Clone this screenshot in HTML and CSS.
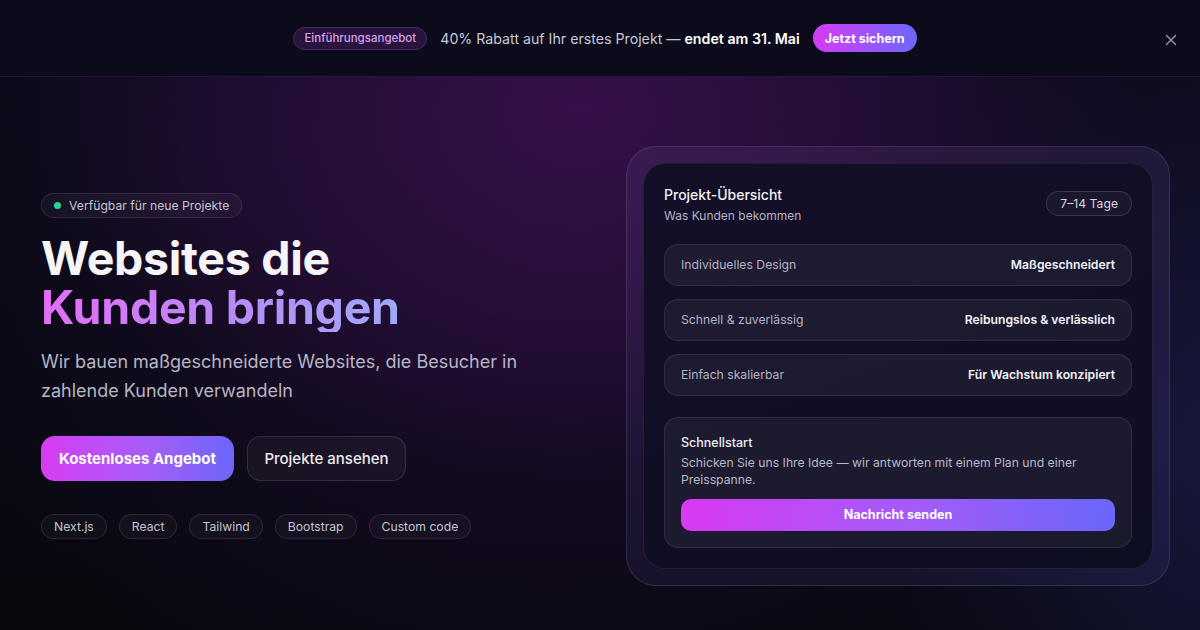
FILE: index.html
```html
<!DOCTYPE html>
<html lang="de">
<head>
<meta charset="utf-8">
<title>Websites die Kunden bringen</title>
<link rel="stylesheet" href="styles.css">
</head>
<body>
<div class="page">
  <header class="promo">
    <div class="promo-inner">
      <span class="promo-tag">Einführungsangebot</span>
      <span class="promo-text">40% Rabatt auf Ihr erstes Projekt — <strong>endet am 31. Mai</strong></span>
      <a class="promo-btn" href="#">Jetzt sichern</a>
    </div>
    <button class="promo-close" aria-label="Schließen">
      <svg width="12" height="12" viewBox="0 0 12 12"><path d="M1.5 1.5l9 9M10.5 1.5l-9 9" stroke="#9a9ab0" stroke-width="1.4" stroke-linecap="round"/></svg>
    </button>
  </header>

  <main class="hero">
    <section class="hero-left">
      <div class="status"><span class="dot"></span>Verfügbar für neue Projekte</div>
      <h1 class="title"><span class="line">Websites die</span><span class="line grad">Kunden bringen</span></h1>
      <p class="lead">Wir bauen maßgeschneiderte Websites, die Besucher in zahlende Kunden verwandeln</p>
      <div class="actions">
        <a class="btn btn-primary" href="#">Kostenloses Angebot</a>
        <a class="btn btn-ghost" href="#">Projekte ansehen</a>
      </div>
      <ul class="tags">
        <li>Next.js</li>
        <li>React</li>
        <li>Tailwind</li>
        <li>Bootstrap</li>
        <li>Custom code</li>
      </ul>
    </section>

    <section class="card-outer">
      <div class="card">
        <div class="card-head">
          <div>
            <div class="card-title">Projekt-Übersicht</div>
            <div class="card-sub">Was Kunden bekommen</div>
          </div>
          <span class="badge">7–14 Tage</span>
        </div>
        <div class="rows">
          <div class="row"><span>Individuelles Design</span><strong>Maßgeschneidert</strong></div>
          <div class="row"><span>Schnell &amp; zuverlässig</span><strong>Reibungslos &amp; verlässlich</strong></div>
          <div class="row"><span>Einfach skalierbar</span><strong>Für Wachstum konzipiert</strong></div>
        </div>
        <div class="quick">
          <div class="quick-title">Schnellstart</div>
          <p class="quick-text">Schicken Sie uns Ihre Idee — wir antworten mit einem Plan und einer Preisspanne.</p>
          <a class="quick-btn" href="#">Nachricht senden</a>
        </div>
      </div>
    </section>
  </main>
</div>
</body>
</html>
```

FILE: styles.css
```css
* { box-sizing: border-box; }
html, body { margin: 0; padding: 0; }
body {
  width: 1200px;
  height: 630px;
  overflow: hidden;
  font-family: "Inter", "Noto Sans", sans-serif;
  background: #08080f;
  color: #f2f2f7;
}
a { text-decoration: none; color: inherit; }

.page { height: 630px; display: flex; flex-direction: column; }

/* promo bar */
.promo {
  position: relative;
  height: 77px;
  flex: none;
  background: #0b0b1c;
  border-bottom: 1px solid #24163a;
  display: flex;
  align-items: center;
  justify-content: center;
}
.promo-inner { display: flex; align-items: center; gap: 13px; margin-left: 10px; }
.promo-tag {
  font-size: 11.5px;
  font-weight: 500;
  color: #d6a2f0;
  background: #28143c;
  border: 1px solid #45285e;
  border-radius: 999px;
  padding: 0 10px;
  height: 23px;
  display: flex;
  align-items: center;
}
.promo-text { font-size: 14.2px; color: #c9c9d6; }
.promo-text strong { color: #ffffff; font-weight: 600; }
.promo-btn {
  font-size: 12.5px;
  font-weight: 700;
  color: #fff;
  background: linear-gradient(90deg, #d63cf4, #6d67fb);
  border-radius: 999px;
  height: 28px;
  padding: 0 12px;
  display: flex;
  align-items: center;
  white-space: nowrap;
}
.promo-close {
  position: absolute;
  right: 23px;
  top: 34px;
  background: none;
  border: 0;
  padding: 0;
  width: 12px;
  height: 12px;
  display: flex;
}

/* hero */
.hero {
  flex: 1;
  display: flex;
  align-items: center;
  justify-content: space-between;
  padding: 24px 30px 0 41px;
  background:
    radial-gradient(ellipse 560px 380px at 580px 30px, rgba(60, 18, 82, 0.8), rgba(60, 18, 82, 0) 100%),
    radial-gradient(ellipse 640px 520px at 560px 180px, rgba(44, 14, 66, 0.5), rgba(44, 14, 66, 0) 100%),
    radial-gradient(ellipse 360px 480px at 1230px 380px, rgba(36, 36, 96, 0.55), rgba(36, 36, 96, 0) 100%),
    linear-gradient(180deg, #0b0a18 0%, #08080f 100%);
}

.hero-left { width: 560px; display: flex; flex-direction: column; align-items: flex-start; }

.status {
  display: flex;
  align-items: center;
  gap: 8px;
  font-size: 12.2px;
  color: #c2c2ce;
  height: 25px;
  padding: 0 12px 0 12px;
  border: 1px solid rgba(255,255,255,0.1);
  background: rgba(255,255,255,0.04);
  border-radius: 999px;
}
.dot { width: 7px; height: 7px; border-radius: 50%; background: #2fd391; }

.title {
  margin: 16px 0 0;
  font-size: 46.5px;
  line-height: 49px;
  font-weight: 700;
  letter-spacing: -0.3px;
  color: #f5f5f7;
}
.title .line { display: block; }
.grad {
  background: linear-gradient(90deg, #e46df5 0%, #b88cf6 55%, #a0a9f8 100%);
  -webkit-background-clip: text;
  background-clip: text;
  color: transparent;
  width: fit-content;
}

.lead {
  margin: 15px 0 0;
  width: 490px;
  font-size: 18px;
  line-height: 29px;
  color: #b6b6c4;
}

.actions { display: flex; gap: 13px; margin-top: 31px; }
.btn {
  height: 45px;
  display: flex;
  align-items: center;
  justify-content: center;
  border-radius: 14px;
  font-size: 15px;
  white-space: nowrap;
}
.btn-primary {
  font-weight: 700;
  color: #fff;
  background: linear-gradient(90deg, #d83cf3 0%, #a45ef7 55%, #6d66fb 100%);
  width: 193px;
}
.btn-ghost {
  font-weight: 500;
  color: #ececf2;
  background: rgba(255,255,255,0.04);
  border: 1px solid rgba(255,255,255,0.12);
  width: 159px;
}

.tags { list-style: none; margin: 33px 0 0; padding: 0; display: flex; gap: 12px; }
.tags li {
  height: 25px;
  display: flex;
  align-items: center;
  padding: 0 12px;
  font-size: 12.2px;
  color: #c4c4d0;
  border: 1px solid rgba(255,255,255,0.1);
  background: rgba(255,255,255,0.03);
  border-radius: 999px;
}

/* card */
.card-outer {
  width: 544px;
  padding: 16px;
  border-radius: 30px;
  background: linear-gradient(180deg, rgba(120, 80, 160, 0.16), rgba(70, 70, 150, 0.16));
  border: 1px solid rgba(255,255,255,0.1);
}
.card {
  border-radius: 22px;
  background: linear-gradient(160deg, #130f28 0%, #0e0e22 100%);
  border: 1px solid rgba(255,255,255,0.08);
  padding: 20px;
}
.card-head { display: flex; justify-content: space-between; align-items: flex-start; }
.card-title { font-size: 14px; font-weight: 500; color: #f2f2f6; line-height: 20px; margin-top: 1px; }
.card-sub { font-size: 12px; color: #b4b4c2; margin-top: 3px; line-height: 16px; }
.badge {
  margin-top: 7px;
  font-size: 12.2px;
  color: #d4d4de;
  border: 1px solid rgba(255,255,255,0.14);
  background: rgba(255,255,255,0.04);
  border-radius: 999px;
  height: 25px;
  padding: 0 13px;
  display: flex;
  align-items: center;
}

.rows { display: flex; flex-direction: column; gap: 13px; margin-top: 20px; }
.row {
  height: 42px;
  display: flex;
  align-items: center;
  justify-content: space-between;
  padding: 0 16px;
  border-radius: 14px;
  background: rgba(255,255,255,0.05);
  border: 1px solid rgba(255,255,255,0.09);
  font-size: 12.2px;
}
.row span { color: #b4b4c4; }
.row strong { color: #f4f4f8; font-weight: 600; }

.quick {
  margin-top: 21px;
  padding: 17px 16px 16px;
  border-radius: 14px;
  background: rgba(255,255,255,0.05);
  border: 1px solid rgba(255,255,255,0.09);
}
.quick-title { font-size: 12.5px; font-weight: 500; color: #ececf2; line-height: 16px; }
.quick-text { margin: 3px 0 0; font-size: 12.2px; line-height: 17px; color: #b8b8c6; }
.quick-btn {
  margin-top: 11px;
  height: 32px;
  border-radius: 10px;
  display: flex;
  align-items: center;
  justify-content: center;
  font-size: 12.5px;
  font-weight: 700;
  color: #fff;
  background: linear-gradient(90deg, #d93af4 0%, #a25cf7 55%, #6a67fb 100%);
}
```
